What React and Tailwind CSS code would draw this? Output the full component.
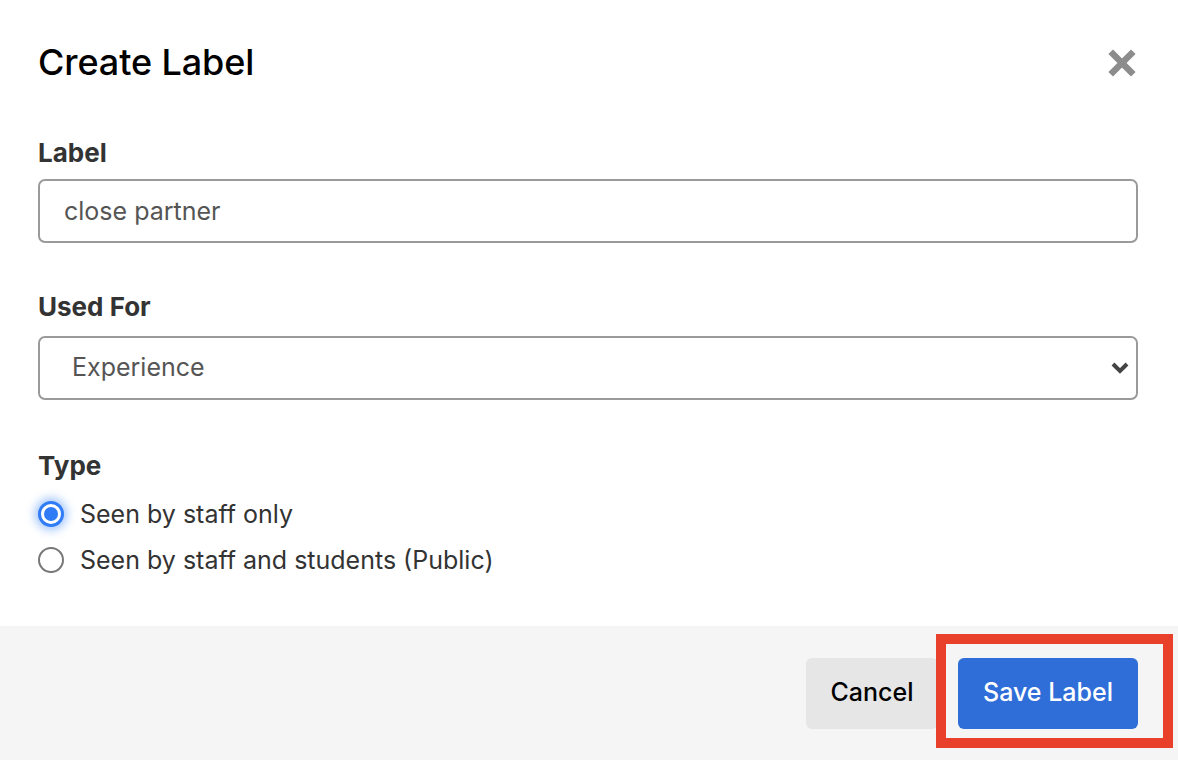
import { useState } from 'react';

export default function App() {
  const [type, setType] = useState('staff');
  const [label, setLabel] = useState('close partner');

  return (
    <div className="relative w-[1178px] h-[760px] bg-white font-['Inter',sans-serif] overflow-hidden">
      <div className="flex flex-col h-full">
        <div className="flex items-start justify-between pl-[38px] pr-[42px] pt-[40px]">
          <h2 className="text-[36px] leading-[44px] font-medium text-black tracking-[-0.1px]">Create Label</h2>
          <button type="button" className="mt-[9px] text-[#8c8c8c]" aria-label="Close">
            <svg width="28" height="28" viewBox="0 0 28 28">
              <path d="M5 5 L23 23 M23 5 L5 23" stroke="currentColor" strokeWidth="6.5" strokeLinecap="square" />
            </svg>
          </button>
        </div>

        <div className="flex flex-col px-[38px] pt-[54px] pr-[40px]">
          <label className="text-[26px] leading-[30px] font-bold text-[#333]">Label</label>
          <input
            value={label}
            onChange={(e) => setLabel(e.target.value)}
            className="mt-[11px] h-[64px] w-full rounded-[7px] border-2 border-[#9a9a9a] px-[24px] text-[25px] text-[#555] outline-none"
          />

          <label className="mt-[49px] text-[26px] leading-[30px] font-bold text-[#333]">Used For</label>
          <div className="relative mt-[14px]">
            <select className="h-[64px] w-full appearance-none rounded-[7px] border-2 border-[#9a9a9a] bg-white px-[32px] text-[25px] text-[#555] outline-none">
              <option>Experience</option>
            </select>
            <svg className="pointer-events-none absolute right-[8px] top-[24px] text-[#444]" width="20" height="16" viewBox="0 0 20 16">
              <path d="M3 4 L10 11 L17 4" fill="none" stroke="currentColor" strokeWidth="4" />
            </svg>
          </div>

          <label className="mt-[51px] text-[26px] leading-[30px] font-bold text-[#333]">Type</label>
          <div className="mt-[18px] flex flex-col gap-[16px]">
            <label className="flex items-center gap-[16px] cursor-pointer">
              <span className={type === 'staff'
                ? 'flex h-[26px] w-[26px] items-center justify-center rounded-full border-[3px] border-[#2f7cf6] bg-white shadow-[0_0_10px_3px_rgba(47,124,246,0.45)]'
                : 'flex h-[26px] w-[26px] items-center justify-center rounded-full border-2 border-[#777] bg-white'}>
                {type === 'staff' && <span className="h-[14px] w-[14px] rounded-full bg-[#2f7cf6]" />}
              </span>
              <input type="radio" className="hidden" checked={type === 'staff'} onChange={() => setType('staff')} />
              <span className="text-[25px] leading-[30px] text-[#333]">Seen by staff only</span>
            </label>
            <label className="flex items-center gap-[16px] cursor-pointer">
              <span className={type === 'public'
                ? 'flex h-[26px] w-[26px] items-center justify-center rounded-full border-[3px] border-[#2f7cf6] bg-white shadow-[0_0_10px_3px_rgba(47,124,246,0.45)]'
                : 'flex h-[26px] w-[26px] items-center justify-center rounded-full border-2 border-[#777] bg-white'}>
                {type === 'public' && <span className="h-[14px] w-[14px] rounded-full bg-[#2f7cf6]" />}
              </span>
              <input type="radio" className="hidden" checked={type === 'public'} onChange={() => setType('public')} />
              <span className="text-[25px] leading-[30px] text-[#333]">Seen by staff and students (Public)</span>
            </label>
          </div>
        </div>

        <div className="mt-auto flex h-[134px] items-center justify-end gap-[20px] bg-[#f5f5f5] pr-[40px]">
          <button type="button" className="h-[71px] w-[132px] rounded-[6px] bg-[#e6e6e6] text-[25px] font-medium text-black">
            Cancel
          </button>
          <button type="button" className="h-[71px] w-[180px] rounded-[6px] bg-[#2f6ed8] text-[25px] font-medium text-white">
            Save Label
          </button>
        </div>
      </div>

      <div className="pointer-events-none absolute left-[936px] top-[634px] h-[114px] w-[237px] border-[10px] border-[#e8402a]" />
    </div>
  );
}
